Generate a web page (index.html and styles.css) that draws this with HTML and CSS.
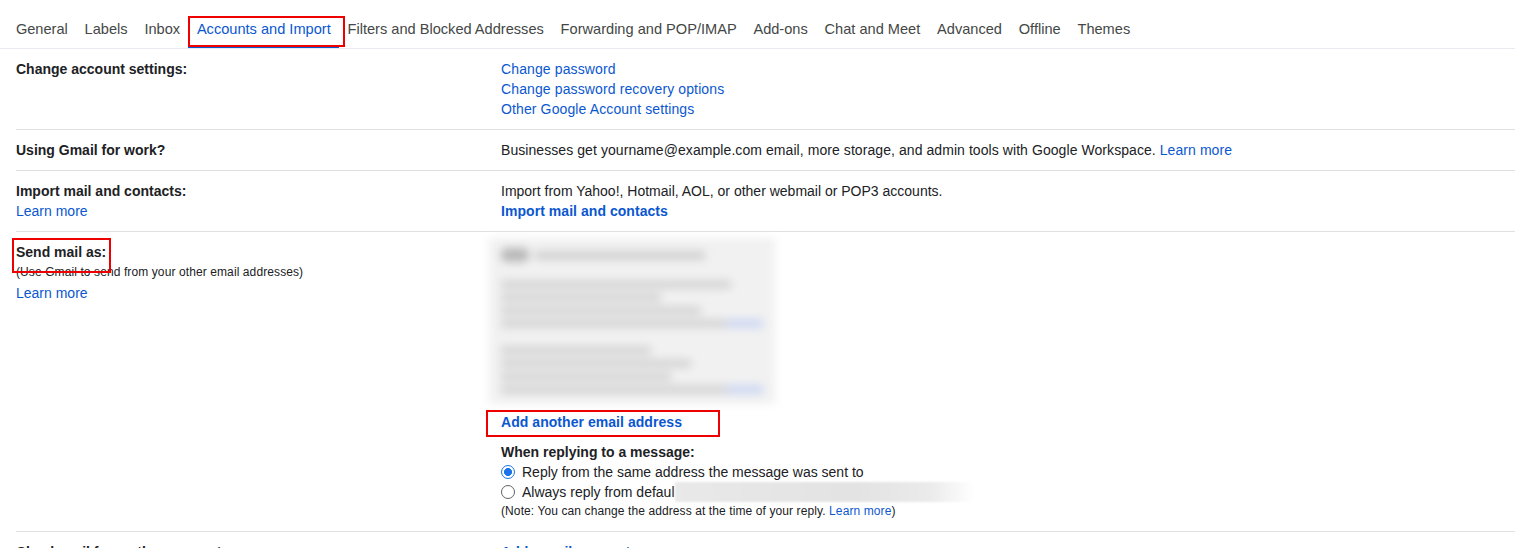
FILE: index.html
```html
<!DOCTYPE html>
<html lang="en">
<head>
<meta charset="utf-8">
<title>Settings - Accounts and Import</title>
<link rel="stylesheet" href="styles.css">
</head>
<body>
<nav class="tabs">
  <span class="tab">General</span>
  <span class="tab">Labels</span>
  <span class="tab">Inbox</span>
  <span class="tab active">Accounts and Import<span class="mark mark-tab"></span></span>
  <span class="tab">Filters and Blocked Addresses</span>
  <span class="tab">Forwarding and POP/IMAP</span>
  <span class="tab">Add-ons</span>
  <span class="tab">Chat and Meet</span>
  <span class="tab">Advanced</span>
  <span class="tab">Offline</span>
  <span class="tab">Themes</span>
</nav>

<section class="rows">
  <div class="row">
    <div class="label"><b>Change account settings:</b></div>
    <div class="value">
      <a class="link">Change password</a>
      <a class="link">Change password recovery options</a>
      <a class="link">Other Google Account settings</a>
    </div>
  </div>

  <div class="row">
    <div class="label"><b>Using Gmail for work?</b></div>
    <div class="value"><p class="para">Businesses get yourname@example.com email, more storage, and admin tools with Google Workspace. <a class="inline-link">Learn more</a></p></div>
  </div>

  <div class="row">
    <div class="label"><b>Import mail and contacts:</b><a class="link">Learn more</a></div>
    <div class="value">
      <span class="line">Import from Yahoo!, Hotmail, AOL, or other webmail or POP3 accounts.</span>
      <a class="link strong">Import mail and contacts</a>
    </div>
  </div>

  <div class="row">
    <div class="label">
      <b class="send-title">Send mail as:<span class="mark mark-send"></span></b>
      <span class="small sub">(Use Gmail to send from your other email addresses)</span>
      <a class="link">Learn more</a>
    </div>
    <div class="value">
      <div class="blurred" aria-hidden="true">
        <div class="blur-inner">
          <div class="b-head"><span class="b-dot"></span><span class="b-bar w170"></span></div>
          <div class="b-block">
            <span class="b-bar w230"></span>
            <span class="b-bar w160"></span>
            <span class="b-bar w200"></span>
            <span class="b-bar w250 tail"></span>
          </div>
          <div class="b-block">
            <span class="b-bar w150"></span>
            <span class="b-bar w190"></span>
            <span class="b-bar w170"></span>
            <span class="b-bar w250 tail"></span>
          </div>
        </div>
      </div>
      <a class="link strong add-link">Add another email address<span class="mark mark-add"></span></a>
      <b class="reply-title">When replying to a message:</b>
      <label class="radio-row"><span class="radio checked"></span>Reply from the same address the message was sent to</label>
      <label class="radio-row"><span class="radio"></span>Always reply from defaul<span class="hidden-addr"></span></label>
      <p class="small note">(Note: You can change the address at the time of your reply. <a class="inline-link">Learn more</a>)</p>
    </div>
  </div>

  <div class="row">
    <div class="label"><b>Check mail from other accounts:</b></div>
    <div class="value"><a class="link strong">Add a mail account</a></div>
  </div>
</section>
</body>
</html>
```

FILE: styles.css
```css
* { box-sizing: border-box; }

html, body {
  margin: 0;
  padding: 0;
  background: #ffffff;
}

body {
  font-family: "Liberation Sans", Arial, Helvetica, sans-serif;
  font-size: 14px;
  line-height: 20px;
  color: #202124;
  width: 1515px;
  height: 548px;
  overflow: hidden;
}

/* ---------- tabs ---------- */
.tabs {
  display: flex;
  padding-left: 7.5px;
  height: 49px;
  border-bottom: 1px solid #e8eaf0;
}

.tab {
  position: relative;
  padding: 19px 8.4px 0;
  height: 48px;
  font-size: 14.6px;
  color: #444746;
  white-space: nowrap;
}

.tab.active {
  color: #0b57d0;
  border-bottom: 3px solid #0b57d0;
}

/* red annotation boxes */
.mark {
  position: absolute;
  border: 2px solid #ee0000;
  pointer-events: none;
}

.mark-tab {
  left: 0;
  top: 16px;
  width: 157px;
  height: 31px;
}

/* ---------- rows ---------- */
.row {
  display: grid;
  grid-template-columns: 485px 1fr;
  margin-left: 16px;
  padding: 10px 0;
  border-bottom: 1px solid #e0e0e0;
}

.label, .value {
  display: flex;
  flex-direction: column;
  align-items: flex-start;
}

.label b, .value b { font-weight: 700; }

.para {
  margin: 0;
  letter-spacing: 0.07px;
}

.link, .inline-link {
  color: #0b57d0;
  text-decoration: none;
  cursor: pointer;
}

.value .link { letter-spacing: 0.12px; }
.value .link.strong { letter-spacing: 0.05px; }

.link.strong { font-weight: 700; }

.small {
  font-size: 12px;
  line-height: 20px;
  letter-spacing: 0.1px;
  margin: 0;
}

.small.sub {
  line-height: 21px;
}

.send-title {
  position: relative;
}

.mark-send {
  left: -4px;
  top: -4px;
  width: 99px;
  height: 35px;
}

/* blurred addresses */
.blurred {
  width: 300px;
  height: 163px;
  margin-left: -12px;
  overflow: visible;
}

.blur-inner {
  filter: blur(4px);
  background: #f1f1f1;
  margin-top: -4px;
  padding: 6px 12px;
  height: 166px;
  width: 286px;
}

.b-head {
  display: flex;
  align-items: center;
  gap: 6px;
  height: 22px;
}

.b-dot {
  display: block;
  width: 28px;
  height: 14px;
  border-radius: 6px;
  background: #b9b9b9;
}

.b-block {
  display: flex;
  flex-direction: column;
  gap: 4px;
  margin-top: 14px;
}

.b-block + .b-block { margin-top: 18px; }

.b-bar {
  display: block;
  height: 9px;
  background: #d6d6d6;
}

.b-head .b-bar { background: #d2d2d2; }

.b-bar.tail {
  background: linear-gradient(to right, #d6d6d6 0, #d6d6d6 84%, #cfd9f3 88%, #cfd9f3 100%);
}

.w150 { width: 150px; }
.w160 { width: 160px; }
.w170 { width: 170px; }
.w190 { width: 190px; }
.w200 { width: 200px; }
.w230 { width: 230px; }
.w250 { width: 262px; }

.add-link {
  position: relative;
  margin-top: 7px;
}

.mark-add {
  left: -15px;
  top: -2px;
  width: 234px;
  height: 27px;
}

.reply-title {
  margin-top: 10px;
}

.radio-row {
  display: flex;
  align-items: center;
  gap: 7px;
  height: 20px;
  white-space: nowrap;
}

.radio {
  display: inline-block;
  width: 14px;
  height: 14px;
  border-radius: 50%;
  border: 1px solid #5f6368;
  background: #fff;
  flex: none;
}

.radio.checked {
  border-color: #1a73e8;
  background: radial-gradient(circle, #1a73e8 0 3.7px, #fff 4.2px);
}

.hidden-addr {
  display: inline-block;
  width: 300px;
  height: 20px;
  margin-left: -7px;
  background: linear-gradient(to right, #e9e9e9 0, #e3e3e3 60%, #ebebeb 85%, rgba(240,240,240,0) 100%);
  filter: blur(1px);
}

.note {
  line-height: 19px;
}
```
